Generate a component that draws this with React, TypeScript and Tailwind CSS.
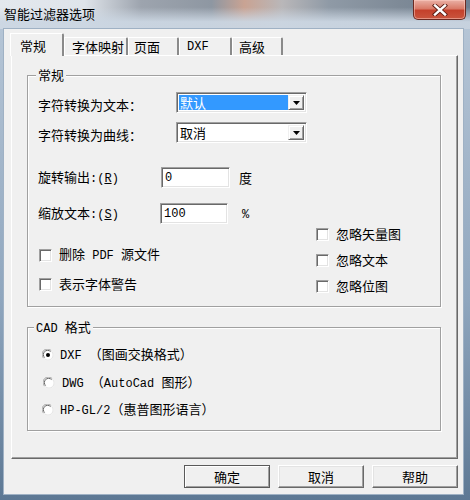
import React from "react";

const L = ({ children }: { children: React.ReactNode }) => (
  <span className="font-['Liberation_Mono',monospace] text-[12px]">{children}</span>
);

const sunken =
  "border border-t-[#a0a0a0] border-l-[#a0a0a0] border-r-white border-b-white shadow-[inset_1px_1px_0_#696969,inset_-1px_-1px_0_#e3e3e3]";

function Checkbox() {
  return <span className={`block w-[13px] h-[13px] bg-white shrink-0 ${sunken}`} />;
}

function Radio({ checked }: { checked?: boolean }) {
  return (
    <svg width="12" height="12" viewBox="0 0 12 12" className="shrink-0">
      <circle cx="6" cy="6" r="5.5" fill="#ffffff" />
      <path d="M1.6 9.2 A5 5 0 0 1 9.2 1.6" stroke="#a0a0a0" strokeWidth="1" fill="none" />
      <path d="M2.6 8.6 A4 4 0 0 1 8.6 2.6" stroke="#696969" strokeWidth="1" fill="none" />
      <path d="M9.6 2.4 A5 5 0 0 1 2.4 9.6" stroke="#e3e3e3" strokeWidth="1" fill="none" />
      {checked && <circle cx="6" cy="6" r="2" fill="#000000" />}
    </svg>
  );
}

function Combo({ text, selected }: { text: string; selected?: boolean }) {
  return (
    <div className={`w-[131px] h-[21px] bg-white flex items-stretch p-[2px] ${sunken}`}>
      <div className="flex-1 flex items-center">
        <span
          className={`h-[15px] w-full flex items-center pl-[1px] leading-[15px] ${
            selected ? "bg-[#3399ff] text-white" : "text-black"
          }`}
        >
          {text}
        </span>
      </div>
      <div className="w-[16px] bg-[#f0f0f0] border border-t-[#f0f0f0] border-l-[#f0f0f0] border-r-[#696969] border-b-[#696969] shadow-[inset_1px_1px_0_white,inset_-1px_-1px_0_#a0a0a0] flex items-center justify-center">
        <svg width="7" height="4" viewBox="0 0 7 4">
          <path d="M0 0 H7 L3.5 4 Z" fill="#000" />
        </svg>
      </div>
    </div>
  );
}

function Input({ value, w }: { value: string; w: string }) {
  return (
    <div className={`${w} h-[21px] bg-white flex items-center pl-[3px] ${sunken}`}>
      <L>{value}</L>
    </div>
  );
}

function Group({
  legend,
  legendLeft,
  h,
  children,
}: {
  legend: React.ReactNode;
  legendLeft: string;
  h: string;
  children: React.ReactNode;
}) {
  return (
    <div
      className={`relative w-[414px] ${h} border border-[#a0a0a0] shadow-[inset_1px_1px_0_#ffffff,1px_1px_0_#ffffff]`}
    >
      <span className={`absolute -top-[9px] ${legendLeft} px-[2px] bg-[#f0f0f0] leading-[16px]`}>
        {legend}
      </span>
      {children}
    </div>
  );
}

function CheckRow({ children }: { children: React.ReactNode }) {
  return (
    <div className="flex items-center gap-[7px] h-[16px] leading-[16px]">
      <Checkbox />
      <span className="whitespace-pre">{children}</span>
    </div>
  );
}

function Tab({ children, w, pl }: { children: React.ReactNode; w: string; pl: string }) {
  return (
    <div
      className={`${w} ${pl} h-[18px] flex items-center leading-[16px] border-t border-l border-t-white border-l-white border-r-2 border-r-[#8a8a8a] rounded-tr-[2px]`}
    >
      {children}
    </div>
  );
}

function Button({ children, def }: { children: React.ReactNode; def?: boolean }) {
  return (
    <div
      className={`w-[86px] h-[23px] flex items-center justify-center bg-[#f0f0f0] leading-[16px] ${
        def
          ? "border border-[#5a5a5a] shadow-[inset_1px_1px_0_#ffffff,inset_-1px_-1px_0_#a0a0a0]"
          : "border border-t-white border-l-white border-r-[#696969] border-b-[#696969] shadow-[inset_-1px_-1px_0_#a0a0a0,inset_1px_1px_0_#e3e3e3]"
      }`}
    >
      {children}
    </div>
  );
}

export default function App() {
  return (
    <div className="w-[470px] h-[500px] overflow-hidden flex flex-col font-['Noto_Sans_CJK_SC','Noto_Sans',sans-serif] text-[13px] text-black bg-[linear-gradient(180deg,#b9c8d8_0%,#8fa6be_60%,#5d7894_100%)]">
      {/* Title bar */}
      <div className="h-[29px] shrink-0 flex justify-between items-start bg-[linear-gradient(180deg,rgba(200,212,226,0)_25%,rgba(203,214,226,0.95)_75%),linear-gradient(90deg,#e3e8ee_0%,#dfe4ea_18%,#9da4ae_30%,#8e97a2_45%,#c9a393_52%,#b9b7b9_60%,#8f9aa6_70%,#7e8a97_85%,#6e7e90_100%)]">
        <span className="ml-[4px] mt-[6px] leading-[16px]">智能过滤器选项</span>
        <div className="mr-[4px] w-[53px] h-[20px] rounded-b-[5px] border border-t-0 border-[#6b2a22] bg-[linear-gradient(180deg,#eab1a6_0%,#d97a68_45%,#c4412c_55%,#c9553e_100%)] shadow-[inset_0_0_0_1px_rgba(255,210,200,0.5)] flex items-center justify-center">
          <svg width="16" height="12" viewBox="0 0 16 12">
            <path d="M3 1.5 L13 10.5 M13 1.5 L3 10.5" stroke="#5b1d14" strokeWidth="4.2" strokeLinecap="square" />
            <path d="M3 1.5 L13 10.5 M13 1.5 L3 10.5" stroke="#ffffff" strokeWidth="2.4" strokeLinecap="square" />
          </svg>
        </div>
      </div>

      {/* Client area */}
      <div className="ml-[4px] w-[459px] h-[465px] shrink-0 bg-[#f0f0f0] flex flex-col shadow-[0_0_0_1px_#9fb1c4]">
        {/* Tabs */}
        <div className="h-[22px] mt-[4px] ml-[6px] flex items-end relative z-10">
          <div className="w-[54px] h-[23px] -mb-[1px] pl-[9px] pt-[4px] leading-[16px] bg-[#f0f0f0] border-t border-l border-t-white border-l-white border-r-2 border-r-[#8a8a8a] rounded-tr-[2px]">
            常规
          </div>
          <Tab w="w-[64px]" pl="pl-[7px]">字体映射</Tab>
          <Tab w="w-[51px]" pl="pl-[5px]">页面</Tab>
          <Tab w="w-[53px]" pl="pl-[7px]">
            <L>DXF</L>
          </Tab>
          <Tab w="w-[51px]" pl="pl-[6px]">高级</Tab>
        </div>

        {/* Panel */}
        <div className="ml-[7px] w-[447px] h-[404px] border border-t-white border-l-white border-r-[#696969] border-b-[#696969] shadow-[inset_-1px_-1px_0_#a0a0a0] flex flex-col">
          <div className="ml-[15px] mt-[19px]">
            <Group legend="常规" legendLeft="left-[8px]" h="h-[232px]">
              <div className="flex items-center mt-[16px] pl-[10px]">
                <span className="w-[138px] pt-[4px] leading-[16px]">字符转换为文本：</span>
                <Combo text="默认" selected />
              </div>
              <div className="flex items-center mt-[9px] pl-[10px]">
                <span className="w-[138px] pt-[4px] leading-[16px]">字符转换为曲线：</span>
                <Combo text="取消" />
              </div>
              <div className="flex items-center mt-[24px] pl-[10px]">
                <span className="w-[123px] leading-[16px]">
                  旋转输出<L>:(<span className="underline">R</span>)</L>
                </span>
                <Input value="0" w="w-[69px]" />
                <span className="ml-[9px] leading-[16px]">度</span>
              </div>
              <div className="flex items-center mt-[15px] pl-[10px]">
                <span className="w-[122px] leading-[16px]">
                  缩放文本<L>:(<span className="underline">S</span>)</L>
                </span>
                <Input value="100" w="w-[68px]" />
                <span className="ml-[14px] leading-[16px]">
                  <L>%</L>
                </span>
              </div>
              <div className="flex pl-[11px]">
                <div className="w-[277px] pt-[23px] flex flex-col gap-[13px]">
                  <CheckRow>
                    删除<L> PDF </L>源文件
                  </CheckRow>
                  <CheckRow>表示字体警告</CheckRow>
                </div>
                <div className="pt-[2px] flex flex-col gap-[10px]">
                  <CheckRow>忽略矢量图</CheckRow>
                  <CheckRow>忽略文本</CheckRow>
                  <CheckRow>忽略位图</CheckRow>
                </div>
              </div>
            </Group>
          </div>
          <div className="ml-[15px] mt-[20px]">
            <Group
              legend={
                <span className="whitespace-pre">
                  <L>CAD </L>格式
                </span>
              }
              legendLeft="left-[6px]"
              h="h-[104px]"
            >
              <div className="flex flex-col pl-[14px] whitespace-pre">
                <div className="mt-[19px] h-[16px] flex items-center gap-[6px] leading-[16px]">
                  <Radio checked />
                  <span>
                    <L>DXF </L>（图画交换格式）
                  </span>
                </div>
                <div className="mt-[12px] h-[16px] flex items-center gap-[7px] pl-[1px] leading-[16px]">
                  <Radio />
                  <span>
                    <L>DWG </L>（<L>AutoCad </L>图形）
                  </span>
                </div>
                <div className="mt-[11px] h-[16px] flex items-center gap-[6px] leading-[16px]">
                  <Radio />
                  <span>
                    <L>HP-GL/2</L>（惠普图形语言）
                  </span>
                </div>
              </div>
            </Group>
          </div>
        </div>

        {/* Buttons */}
        <div className="mt-[6px] pr-[5px] flex justify-end gap-[8px]">
          <Button def>确定</Button>
          <Button>取消</Button>
          <Button>帮助</Button>
        </div>
      </div>
    </div>
  );
}
